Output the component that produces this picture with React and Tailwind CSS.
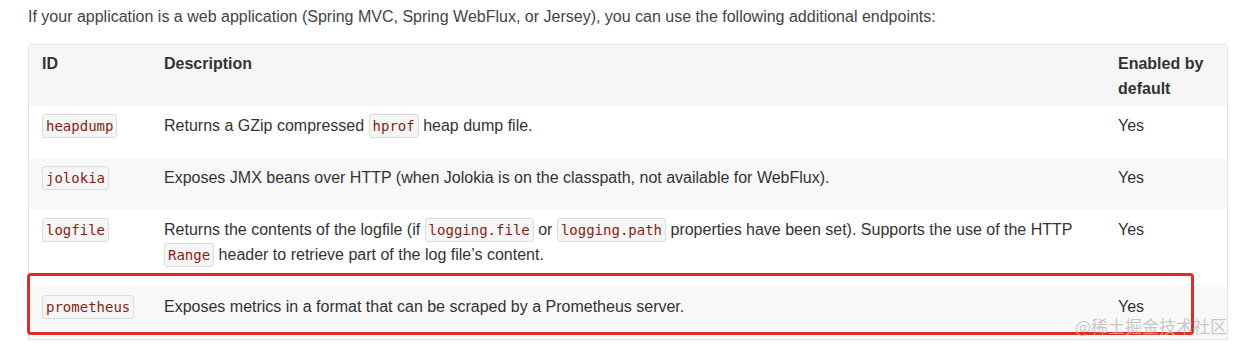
const rows = [
  {
    id: 'heapdump',
    desc: (
      <>
        Returns a GZip compressed <Code>hprof</Code> heap dump file.
      </>
    ),
    enabled: 'Yes',
  },
  {
    id: 'jolokia',
    desc: 'Exposes JMX beans over HTTP (when Jolokia is on the classpath, not available for WebFlux).',
    enabled: 'Yes',
  },
  {
    id: 'logfile',
    desc: (
      <>
        Returns the contents of the logfile (if <Code>logging.file</Code> or <Code>logging.path</Code> properties
        have been set). Supports the use of the HTTP <Code>Range</Code> header to retrieve part of the log file’s
        content.
      </>
    ),
    enabled: 'Yes',
  },
  {
    id: 'prometheus',
    desc: 'Exposes metrics in a format that can be scraped by a Prometheus server.',
    enabled: 'Yes',
  },
];

function Code({ children }) {
  return (
    <code className="rounded-[3px] border border-[#dcdcdc] bg-[#f6f6f6] px-[3px] py-[3px] font-['DejaVu_Sans_Mono','Liberation_Mono',monospace] text-[14px] leading-none text-[#8c1c13]">
      {children}
    </code>
  );
}

export default function App() {
  return (
    <div className="relative h-[348px] w-[1250px] overflow-hidden bg-white font-['Liberation_Sans',Arial,sans-serif] text-[#333]">
      <p className="pl-[28px] pt-[5px] text-[16px] leading-[24px] text-[#444]">
        If your application is a web application (Spring MVC, Spring WebFlux, or Jersey), you can use the following
        additional endpoints:
      </p>

      <div className="ml-[28px] mt-[15px] w-[1200px] overflow-hidden rounded-t-[3px] border border-[#e3e3e3]">
        {/* header */}
        <div className="flex bg-[#f6f6f6] pb-[5px] pt-[6px] text-[16px] font-bold leading-[25px]">
          <div className="w-[135px] shrink-0 pl-[13px]">ID</div>
          <div className="w-[954px] shrink-0">Description</div>
          <div className="w-[100px]">
            Enabled by
            <br />
            default
          </div>
        </div>

        {rows.map((row, i) => (
          <div
            key={row.id}
            className={`flex pb-[20px] pt-[7px] text-[16px] leading-[25px] ${i % 2 === 1 ? 'bg-[#f8f8f8]' : 'bg-white'}`}
          >
            <div className="w-[135px] shrink-0 pl-[13px]">
              <Code>{row.id}</Code>
            </div>
            <div className="w-[940px] shrink-0 pr-[10px]">{row.desc}</div>
            <div className="ml-[14px]">{row.enabled}</div>
          </div>
        ))}
      </div>

      {/* highlight box drawn over the last row */}
      <div className="pointer-events-none absolute left-[27px] top-[273px] h-[62px] w-[1167px] rounded-[4px] border-[3px] border-[#e22b22]" />

      {/* watermark */}
      <div className="pointer-events-none absolute left-[1075px] top-[315px] font-['Noto_Sans_CJK_SC',sans-serif] text-[17px] leading-[22px] text-[#bbb]/80">
        @稀土掘金技术社区
      </div>
    </div>
  );
}
